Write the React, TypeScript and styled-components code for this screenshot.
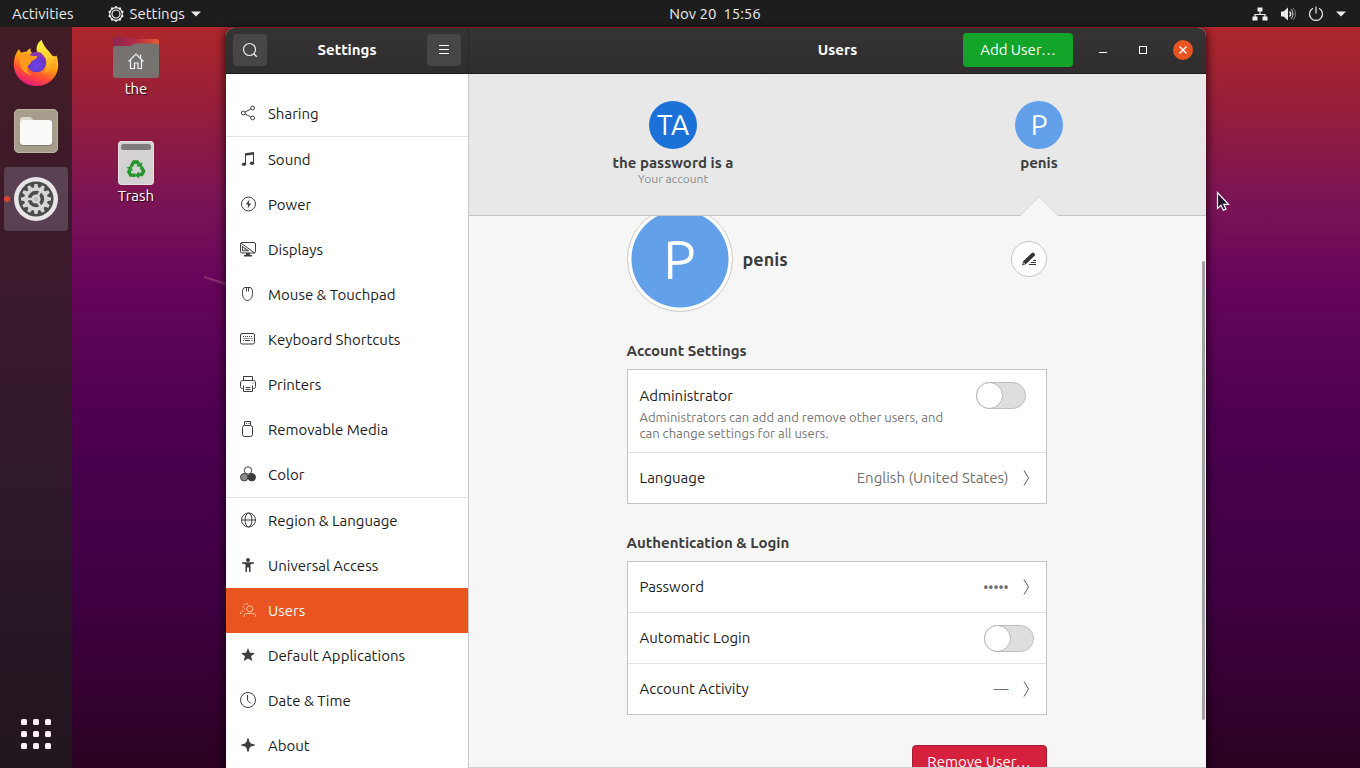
import type { ReactNode } from 'react';
import styled, { createGlobalStyle, css } from 'styled-components';

const GlobalStyle = createGlobalStyle`
  *, *::before {
    box-sizing: border-box;
  }

  body {
    margin: 0;
    font-family: 'Ubuntu', 'Noto Sans', 'Open Sans', sans-serif;
    font-size: 15px;
    line-height: 20px;
    color: #1c1c1c;
  }

  button {
    margin: 0;
    padding: 0;
    border: none;
    background: none;
    color: inherit;
    font: inherit;
    cursor: pointer;
  }

  svg {
    display: block;
    flex: none;
  }

  h1, h2, h3, p {
    margin: 0;
    font-size: inherit;
  }
`;

/* Desktop */

const Screen = styled.div`
  position: relative;
  display: flex;
  flex-direction: column;
  height: 100vh;
  overflow: hidden;
  background: linear-gradient(
    #b0272b 3%,
    #981f38 13%,
    #7b1455 26%,
    #68065b 36%,
    #4d0150 54%,
    #3f0042 78%,
    #2b0121 100%
  );
`;

const TopBar = styled.header`
  flex: none;
  display: grid;
  grid-template-columns: 1fr auto 1fr;
  align-items: center;
  height: 27px;
  padding: 0 14px 0 12px;
  background: #1d1d1d;
  color: #ececec;
`;

const TopBarGroup = styled.div<{ $gap: number; $end?: boolean }>`
  display: flex;
  align-items: center;
  justify-content: ${({ $end }) => ($end ? 'flex-end' : 'flex-start')};
  gap: ${({ $gap }) => $gap}px;
`;

const AppMenu = styled.button`
  display: flex;
  align-items: center;
  gap: 6px;
`;

const Clock = styled.button`
  margin-left: 72px;
  white-space: pre;
`;

const Workspace = styled.div`
  flex: 1;
  display: flex;
  min-height: 0;
`;

const Dock = styled.nav`
  flex: none;
  display: flex;
  flex-direction: column;
  align-items: center;
  gap: 4px;
  width: 72px;
  padding: 4px 0 2px;
  background: linear-gradient(#421c25, #3c1a2c 30%, #2b1829 70%, #21161e);
`;

const DockItem = styled.button<{ $active?: boolean }>`
  position: relative;
  display: flex;
  align-items: center;
  justify-content: center;
  width: 64px;
  height: 64px;
  border-radius: 4px;
  background: ${({ $active }) => ($active ? '#594152' : 'transparent')};

  &:last-child {
    margin-top: auto;
  }

  ${({ $active }) =>
    $active &&
    css`
      &::before {
        content: '';
        position: absolute;
        left: 0;
        top: 29px;
        width: 6px;
        height: 6px;
        border-radius: 50%;
        background: #e0452c;
      }
    `}
`;

const DesktopIcons = styled.div`
  flex: none;
  display: flex;
  flex-direction: column;
  align-items: center;
  gap: 42px;
  width: 154px;
  padding: 9px 26px 0 0;
`;

const DesktopIcon = styled.button`
  display: flex;
  flex-direction: column;
  align-items: center;
  gap: 1px;
  color: #fff;
  text-shadow: 1px 1px 1px rgba(0, 0, 0, 0.8);
`;

const WallpaperStroke = styled.svg`
  position: absolute;
  left: 203px;
  top: 274px;
`;

const Pointer = styled.svg`
  position: absolute;
  left: 1216px;
  top: 191px;
`;

/* Window */

const Window = styled.main`
  position: relative;
  flex: 1;
  display: flex;
  flex-direction: column;
  min-width: 0;
  margin: 1px 154px 0 0;
  border-radius: 8px 8px 0 0;
  background: #f6f6f6;
  box-shadow: 0 2px 9px 2px rgba(0, 0, 0, 0.6);
`;

const TitleBar = styled.header`
  flex: none;
  display: flex;
  height: 46px;
  border-bottom: 1px solid #1b1b1b;
  border-radius: 8px 8px 0 0;
  background: linear-gradient(#353333, #2f2d2e);
  color: #fff;
`;

const TitleSection = styled.div<{ $side?: boolean }>`
  display: grid;
  grid-template-columns: 1fr auto 1fr;
  align-items: center;
  ${({ $side }) =>
    $side
      ? css`
          flex: none;
          width: 243px;
          padding: 0 7px 2px;
          border-right: 1px solid #2a2829;
        `
      : css`
          flex: 1;
          padding: 0 13px 2px;
        `}
`;

const Title = styled.h1`
  grid-column: 2;
  font-weight: 700;
`;

const HeaderButton = styled.button<{ $end?: boolean }>`
  display: flex;
  align-items: center;
  justify-content: center;
  justify-self: ${({ $end }) => ($end ? 'end' : 'start')};
  width: 34px;
  height: 32px;
  border-radius: 4px;
  background: #474545;
`;

const WindowControls = styled.div`
  display: flex;
  align-items: center;
  justify-content: flex-end;
  gap: 20px;
`;

const AddButton = styled.button`
  width: 110px;
  height: 34px;
  border-radius: 4px;
  background: #12a52a;
`;

const ControlButton = styled.button<{ $close?: boolean }>`
  display: flex;
  align-items: center;
  justify-content: center;
  width: 20px;
  height: 20px;
  border-radius: 50%;
  background: ${({ $close }) => ($close ? '#e95420' : 'transparent')};
`;

const Body = styled.div`
  flex: 1;
  display: flex;
  min-height: 0;
`;

const Sidebar = styled.nav`
  flex: none;
  width: 243px;
  padding-top: 17px;
  overflow: hidden;
  border-right: 1px solid #c9c9c9;
  background: #fff;
`;

const SidebarItem = styled.a<{ $active?: boolean; $divided?: boolean }>`
  display: flex;
  align-items: center;
  gap: 12px;
  height: ${({ $divided }) => ($divided ? 46 : 45)}px;
  padding: 0 14px;
  border-bottom: ${({ $divided }) => ($divided ? '1px solid #e3e3e3' : 'none')};
  background: ${({ $active }) => ($active ? '#e95420' : 'transparent')};
  color: ${({ $active }) => ($active ? '#fff' : '#1c1c1c')};
  text-decoration: none;

  svg {
    margin-bottom: 2px;
    color: ${({ $active }) => ($active ? '#ffc7ad' : '#3d3d3d')};
  }
`;

const Panel = styled.section`
  flex: 1;
  display: flex;
  flex-direction: column;
  min-width: 0;
  border-bottom: 1px solid #d0d0d0;
`;

const Accounts = styled.div`
  flex: none;
  display: grid;
  grid-template-columns: 1fr 1fr;
  gap: 32px;
  height: 142px;
  padding-left: 37px;
  border-bottom: 1px solid #c4c4c4;
  background: #e8e8e8;
`;

const Account = styled.button`
  position: relative;
  display: flex;
  flex-direction: column;
  align-items: center;
  padding-top: 27px;
  color: #3d3d3d;
`;

const AccountName = styled.span`
  margin-top: 4px;
  font-weight: 700;
`;

const AccountNote = styled.span`
  font-size: 12px;
  line-height: 12px;
  color: #8b8b8b;
`;

const SelectedMark = styled.svg`
  position: absolute;
  left: calc(50% - 19px);
  bottom: -1px;
`;

const Avatar = styled.span<{ $color: string; $large?: boolean }>`
  flex: none;
  display: flex;
  align-items: center;
  justify-content: center;
  width: ${({ $large }) => ($large ? 106 : 48)}px;
  height: ${({ $large }) => ($large ? 106 : 48)}px;
  border-radius: 50%;
  background: ${({ $color }) => $color};
  color: #fff;
  font-size: ${({ $large }) => ($large ? 54 : 28)}px;

  ${({ $large, $color }) =>
    $large &&
    css`
      border: 1px solid #cfc8c4;
      background: radial-gradient(${$color} 48px, #fff 49px);
    `}
`;

const Scroller = styled.div`
  position: relative;
  flex: 1;
  min-height: 0;
  padding-right: 2px;
  overflow: hidden;
`;

const ScrollThumb = styled.div`
  position: absolute;
  right: 1px;
  top: 45px;
  bottom: 47px;
  width: 3px;
  border-radius: 2px;
  background: #a3a1a4;
`;

const Content = styled.div`
  display: flex;
  flex-direction: column;
  max-width: 420px;
  margin: -10px auto 0;
`;

const Profile = styled.div`
  display: flex;
  align-items: center;
  gap: 10px;
`;

const ProfileName = styled.h2`
  flex: 1;
  font-size: 18px;
  line-height: 24px;
  color: #3d3d3d;
`;

const EditButton = styled.button`
  display: flex;
  align-items: center;
  justify-content: center;
  width: 36px;
  height: 36px;
  border: 1px solid #c6c6c6;
  border-radius: 50%;
  background: #fdfdfd;
`;

const SectionTitle = styled.h3`
  margin: 29px 0 8px;
  color: #3d3d3d;
`;

const Card = styled.div`
  border: 1px solid #c4c4c4;
  background: #fff;
`;

const rowStyle = css`
  display: flex;
  align-items: center;
  gap: 14px;
  width: 100%;
  min-height: 50px;
  text-align: left;

  &:not(:first-child) {
    min-height: 51px;
    border-top: 1px solid #e2e2e2;
  }
`;

const Row = styled.div`
  ${rowStyle}
  padding: 0 12px;
`;

const RowButton = styled.button`
  ${rowStyle}
  padding: 0 16px 0 12px;
`;

const AdminRow = styled.div`
  display: grid;
  grid-template-columns: 1fr auto;
  align-items: center;
  padding: 12px 20px 11px 12px;
`;

const RowLabel = styled.label`
  flex: 1;
`;

const RowText = styled.span`
  flex: 1;
`;

const RowValue = styled.span<{ $masked?: boolean }>`
  font-size: ${({ $masked }) => ($masked ? 14 : 15)}px;
  color: #6f6f6f;
`;

const Hint = styled.p`
  max-width: 320px;
  font-size: 13px;
  line-height: 16px;
  color: #757575;
`;

const Switch = styled.input.attrs({ type: 'checkbox', role: 'switch' })`
  appearance: none;
  flex: none;
  width: 50px;
  height: 27px;
  margin: 0;
  border: 1px solid #bdbdbd;
  border-radius: 14px;
  background: #dedede;
  cursor: pointer;

  &::before {
    content: '';
    display: block;
    width: 27px;
    height: 27px;
    margin: -1px;
    border: 1px solid #b5b5b5;
    border-radius: 50%;
    background: #fff;
  }

  &:checked::before {
    margin-left: 22px;
  }
`;

const RemoveButton = styled.button`
  align-self: flex-end;
  width: 135px;
  height: 34px;
  margin-top: 30px;
  border: 1px solid #a31c33;
  border-radius: 4px;
  background: #d6213e;
  color: #fff;
`;

/* Icons */

type IconProps = { children: ReactNode; size?: number };

const LineIcon = ({ children, size = 16 }: IconProps) => (
  <svg width={size} height={size} viewBox="0 0 16 16" fill="none" stroke="currentColor" aria-hidden="true">
    {children}
  </svg>
);

const SharingIcon = () => (
  <LineIcon>
    <circle cx="3.3" cy="8" r="1.9" />
    <circle cx="12.6" cy="3" r="1.9" />
    <circle cx="12.6" cy="13" r="1.9" />
    <path d="M5 7.1l5.9-3.2M5 8.9l5.9 3.2" />
  </LineIcon>
);

const SoundIcon = () => (
  <LineIcon>
    <path d="M5.5 13V3.2l8-1.2v10" />
    <path d="M5 2.2l9-1.2v2.6l-9 1.2z" fill="currentColor" stroke="none" />
    <ellipse cx="4" cy="13.2" rx="2.1" ry="1.8" fill="currentColor" stroke="none" />
    <ellipse cx="12" cy="12.2" rx="2.1" ry="1.8" fill="currentColor" stroke="none" />
  </LineIcon>
);

const PowerIcon = () => (
  <LineIcon>
    <circle cx="8.5" cy="8" r="7" />
    <path d="M9.4 3.6L5.8 8.6h2.4l-.6 3.8 3.6-5H8.8z" fill="currentColor" stroke="none" />
  </LineIcon>
);

const DisplaysIcon = () => (
  <LineIcon>
    <rect x=".5" y="1.5" width="15" height="10.5" rx="1.5" />
    <path d="M1 2l13.5 10M2.5 5.5v4.3h6zM4.2 8.2h1.4" />
    <path d="M6 12h4v2h2v1.4H4V14h2z" fill="currentColor" stroke="none" />
  </LineIcon>
);

const MouseIcon = () => (
  <LineIcon>
    <path d="M5 1.5h5c2 0 2.5 2.6 2.5 5.8 0 4-1.8 7.2-5 7.2s-5-3.2-5-7.2C2.5 4.1 3 1.5 5 1.500zM6.500 1.500v4M8.500 1.500v4" />
  </LineIcon>
);

const KeyboardIcon = () => (
  <LineIcon>
    <rect x=".5" y="2.5" width="14" height="10.5" rx="1.5" />
    <path d="M3 5.5h9.5M3.500 7.500h9" strokeDasharray="1 1" />
    <path d="M3 9.500h1M5 9.500h5M11.500 9.500h1" />
  </LineIcon>
);

const PrinterIcon = () => (
  <LineIcon>
    <path d="M3.5 4.5v-4h9v4M3 12.5H2.3C1 12.5.5 11.8.5 10.5V7c0-1.500.8-2.500 2.200-2.500h10.600c1.400 0 2.200 1 2.200 2.500v3.500c0 1.300-.5 2-1.800 2H13" />
    <path d="M3.5 9.5v6h9v-6M5.500 11.500h5M5.500 13.500h5M12.500 7h1" />
  </LineIcon>
);

const RemovableIcon = () => (
  <LineIcon>
    <path d="M4.5 4V.5h6V4M6 2.5h1M8.500 2.500h1" />
    <rect x="2.5" y="4.5" width="10" height="11" rx="2" />
  </LineIcon>
);

const ColorIcon = () => (
  <LineIcon>
    <circle cx="8" cy="4.5" r="3.7" fill="#fff" />
    <circle cx="4.2" cy="11.2" r="3.7" fill="#8a8a8a" />
    <circle cx="11.8" cy="11.2" r="3.7" fill="currentColor" />
  </LineIcon>
);

const GlobeIcon = () => (
  <LineIcon>
    <circle cx="8.5" cy="8" r="7" />
    <ellipse cx="8.5" cy="8" rx="3.4" ry="7" />
    <path d="M1.5 8h14" />
  </LineIcon>
);

const AccessIcon = () => (
  <LineIcon>
    <circle cx="8" cy="3" r="2" fill="currentColor" stroke="none" />
    <path d="M2 5.2h12v1.300l-3.500.7V15H9v-4.500H7V15H5.500V7.200L2 6.500z" fill="currentColor" stroke="none" />
  </LineIcon>
);

const UsersIcon = () => (
  <LineIcon>
    <circle cx="9.800" cy="6.800" r="3" />
    <path d="M4 15v-.8c0-2 1.200-2.700 3.200-2.700h5.300c2 0 3.200.7 3.200 2.700v.8" />
    <path d="M8 2.200C6 .8 3.300 2 3.300 4.400c0 1.500.7 2.500 1.800 3.100M.5 12c0-2 1-3 3-3" strokeDasharray="2 1" />
  </LineIcon>
);

const StarIcon = () => (
  <LineIcon>
    <path d="M8 1l1.900 4.700 5 .3-3.900 3.200 1.300 4.900L8 11.400l-4.300 2.700L5 9.200 1.100 6l5-.3z" fill="currentColor" stroke="none" />
  </LineIcon>
);

const ClockIcon = () => (
  <LineIcon>
    <circle cx="8" cy="8" r="7.5" />
    <path d="M7.5 3v5.300l3 3" />
  </LineIcon>
);

const AboutIcon = () => (
  <LineIcon>
    <path d="M8 1.500C8.800 5.500 10.200 7.200 14.500 8 10.200 8.800 8.800 10.500 8 14.500 7.200 10.500 5.800 8.800 1.500 8 5.800 7.200 7.200 5.500 8 1.500z" fill="currentColor" />
  </LineIcon>
);

const Chevron = () => (
  <svg width="7" height="16" viewBox="0 0 7 16" fill="none" stroke="#5a5a5a" aria-hidden="true">
    <path d="M1 .5L5.5 8 1 15.5" />
  </svg>
);

const CaretDown = () => (
  <svg width="10" height="6" viewBox="0 0 10 6" fill="#ececec" aria-hidden="true">
    <path d="M0 .5h10L5 5.5z" />
  </svg>
);

const bumps = [0, 36, 72, 108, 144, 180, 216, 252, 288, 324];

const GearMenuIcon = () => (
  <LineIcon>
    <circle cx="8" cy="8" r="6.3" strokeWidth="1.200" />
    <circle cx="8" cy="8" r="4" strokeWidth="1.200" />
    {bumps.map((angle) => (
      <circle key={angle} cx="8" cy="1.200" r="1.100" fill="currentColor" stroke="none" transform={`rotate(${angle} 8 8)`} />
    ))}
  </LineIcon>
);

const NetworkIcon = () => (
  <LineIcon>
    <path d="M8 5v4M3 12V8.500h10V12" strokeWidth="1.200" />
    <path d="M5.500 1.500h5v4h-5zM.5 10.500h5v4h-5zM10.500 10.500h5v4h-5z" fill="currentColor" stroke="none" />
  </LineIcon>
);

const VolumeIcon = () => (
  <LineIcon>
    <path d="M1 5.500h2.500L8 1.500v13l-4.500-4H1z" fill="currentColor" stroke="none" />
    <path d="M9.500 5.500c1.300 1.400 1.300 3.600 0 5" strokeWidth="1.400" />
    <path d="M11 3.200c2.500 2.700 2.500 6.900 0 9.600" />
    <path d="M13 2c3.200 3.500 3.200 8.500 0 12" opacity=".5" />
  </LineIcon>
);

const ShutdownIcon = () => (
  <LineIcon>
    <path d="M5 2.200a6.500 6.500 0 1 0 6 0M8 .5v7" strokeWidth="1.200" />
  </LineIcon>
);

const PencilIcon = () => (
  <LineIcon>
    <path d="M1 14.500l1.200-4.200L10.800 2c.7-.7 1.500-.7 2.200 0l.6.700c.7.7.6 1.400 0 2.100L5 13z" fill="#333" stroke="none" />
    <path d="M2.700 11.200l1.400 1.400-1.900.8z" fill="#ddd" stroke="none" />
    <path d="M12 9.500h3M10 11.500h5M8 13.500h7" stroke="#333" />
  </LineIcon>
);

const FirefoxIcon = () => (
  <svg width="46" height="48" viewBox="0 0 46 48" aria-hidden="true">
    <defs>
      <linearGradient id="fox-body" x1=".8" y1=".1" x2=".35" y2="1">
        <stop offset="0" stopColor="#ffe03a" />
        <stop offset=".4" stopColor="#ff980e" />
        <stop offset=".7" stopColor="#ff4a38" />
        <stop offset="1" stopColor="#e5177e" />
      </linearGradient>
      <linearGradient id="fox-flame" x1=".3" y1="0" x2=".8" y2="1">
        <stop offset="0" stopColor="#fff04a" />
        <stop offset=".5" stopColor="#ffd22e" />
        <stop offset="1" stopColor="#ff8a1c" />
      </linearGradient>
      <radialGradient id="fox-globe" cx=".5" cy=".7" r=".7">
        <stop offset="0" stopColor="#6a42e8" />
        <stop offset=".6" stopColor="#6b38c4" />
        <stop offset="1" stopColor="#9a35b4" />
      </radialGradient>
    </defs>
    <path
      d="M6 10c.6 1.700 1.200 2.700 2.500 3.700 1.700-.8 3.300-1 5-.7 1-1.800 2.300-3 4-3.800-.3 2 .2 3.700 1.500 4.800l13-2c5.500 3 9 7.500 11.500 4.500C45.500 22 46 29 43.500 34.500 40 42.500 32 47 23.500 47 11 47 .8 37.500.8 25.500.8 19 2.500 14 6 10z"
      fill="url(#fox-body)"
    />
    <path
      d="M28.500.8c-4 3-5.400 7-4.700 11.700 7 1.500 10.700 6.500 10.200 13-.2 3.500-1.500 6-3.500 8.500C38 33 43 28.500 44 21c-.8-1.700-2-3.300-3.300-4.500.2 1.600 0 2.700-.5 3.500-1.300-7-8.800-9.500-11.700-19.200z"
      fill="url(#fox-flame)"
    />
    <circle cx="23.5" cy="23.5" r="9.8" fill="url(#fox-globe)" />
    <path d="M16.500 16c3-3.500 9-4.500 14-.5-3-.5-5 0-6.500 1.300z" fill="#8d35b6" />
    <path
      d="M6.500 16.500c3.500-2.500 7.500-2.800 10.500-.3 2 1 5 .6 7 .8.8.8-.5 2.700-2.500 3.800-2 1.200-3.500 1.200-3.800 3-.3 1.600-2.200 1.700-3.200 3.500-1.500 3 .5 7 4.500 8.500-8 0-14-8-12.500-19.300z"
      fill="#ff9a1f"
    />
  </svg>
);

const FilesIcon = () => (
  <svg width="44" height="44" viewBox="0 0 44 44" aria-hidden="true">
    <rect width="44" height="44" rx="5" fill="#a69d8c" />
    <rect x=".5" y=".5" width="43" height="43" rx="4.5" fill="none" stroke="#bdb4a4" />
    <path d="M6 10.500C6 9 7 8 8.500 8h7c1.200 0 1.800.5 2.500 1.500l1.500 2H24v8H6z" fill="#dcd7cb" />
    <rect x="6" y="12" width="32" height="25" rx="3" fill="#827a6b" />
    <rect x="6" y="11" width="32" height="25" rx="3" fill="#fbfaf8" />
  </svg>
);

const teeth = [0, 30, 60, 90, 120, 150, 180, 210, 240, 270, 300, 330];

const SettingsAppIcon = () => (
  <svg width="44" height="44" viewBox="0 0 44 44" aria-hidden="true">
    <circle cx="22" cy="22" r="22" fill="#e9e4e8" />
    <circle cx="22" cy="22" r="17.5" fill="#4b4b4b" />
    <g fill="#d6d6d6">
      {teeth.map((angle) => (
        <path key={angle} d="M19.800 11l.7-4h3l.7 4z" transform={`rotate(${angle} 22 22)`} />
      ))}
    </g>
    <circle cx="22" cy="22" r="10" fill="none" stroke="#d6d6d6" strokeWidth="3.600" />
    <circle cx="22" cy="22" r="4.600" fill="#d6d6d6" />
    <path d="M22 22h-9M22 22l4.800 8M22 22l4.800-8" stroke="#d6d6d6" strokeWidth="2.400" />
    <circle cx="22" cy="22" r="2.200" fill="#bdbdbd" />
  </svg>
);

const AppsGridIcon = () => (
  <svg width="30" height="30" viewBox="0 0 30 30" fill="#fbeef8" aria-hidden="true">
    {[0, 12, 24].map((y) => [0, 12, 24].map((x) => <rect key={`${x}-${y}`} x={x} y={y} width="6" height="6" rx="1.500" />))}
  </svg>
);

const HomeFolderIcon = () => (
  <svg width="46" height="42" viewBox="0 0 46 42" aria-hidden="true">
    <defs>
      <linearGradient id="folder-back">
        <stop offset="0" stopColor="#8c2454" />
        <stop offset=".5" stopColor="#b62b45" />
        <stop offset="1" stopColor="#ea5a2c" />
      </linearGradient>
    </defs>
    <path d="M0 4c0-2 1.200-3 3-3h12c3 0 3.500 2 6 2h22c2 0 3 1 3 3v10H0z" fill="url(#folder-back)" />
    <path d="M0 13c0-2 1-3 3-3h13c3 0 3.500-2.500 6.500-2.500H43c2 0 3 1 3 3V39c0 2-1 3-3 3H3c-2 0-3-1-3-3z" fill="#757270" />
    <path d="M15.500 25.500l7.500-7.500 7.500 7.500M17.500 24v8.500h4V27h3.500v5.500h3.500V24M27.500 22v-3.500" fill="none" stroke="#f2f2f2" strokeWidth="1.200" />
  </svg>
);

const TrashIcon = () => (
  <svg width="36" height="44" viewBox="0 0 36 44" aria-hidden="true">
    <rect width="36" height="44" rx="4" fill="#d3d1d1" />
    <rect x=".5" y=".5" width="35" height="43" rx="3.5" fill="none" stroke="#e3e1e1" />
    <rect x="3" y="3" width="30" height="6" rx="2.5" fill="#7d7b7c" />
    <g fill="none" stroke="#24942c" strokeWidth="3.400">
      {[0, 120, 240].map((angle) => (
        <g key={angle} transform={`rotate(${angle} 18 28.500)`}>
          <path d="M13.200 25.300l2.600-4.300h3.600l1.400 2.300" />
          <path d="M18.200 25.200l5.400 1 .8-5.200z" fill="#24942c" stroke="none" />
        </g>
      ))}
    </g>
  </svg>
);

/* Data */

const panels = [
  { label: 'Sharing', icon: <SharingIcon />, divided: true },
  { label: 'Sound', icon: <SoundIcon /> },
  { label: 'Power', icon: <PowerIcon /> },
  { label: 'Displays', icon: <DisplaysIcon /> },
  { label: 'Mouse & Touchpad', icon: <MouseIcon /> },
  { label: 'Keyboard Shortcuts', icon: <KeyboardIcon /> },
  { label: 'Printers', icon: <PrinterIcon /> },
  { label: 'Removable Media', icon: <RemovableIcon /> },
  { label: 'Color', icon: <ColorIcon />, divided: true },
  { label: 'Region & Language', icon: <GlobeIcon /> },
  { label: 'Universal Access', icon: <AccessIcon /> },
  { label: 'Users', icon: <UsersIcon />, active: true },
  { label: 'Default Applications', icon: <StarIcon /> },
  { label: 'Date & Time', icon: <ClockIcon /> },
  { label: 'About', icon: <AboutIcon /> },
];

const SystemBar = () => (
  <TopBar>
    <TopBarGroup $gap={34}>
      <button>Activities</button>
      <AppMenu>
        <GearMenuIcon />
        Settings
        <CaretDown />
      </AppMenu>
    </TopBarGroup>
    <Clock>Nov 20  15:56</Clock>
    <TopBarGroup $gap={12} $end>
      <NetworkIcon />
      <VolumeIcon />
      <ShutdownIcon />
      <CaretDown />
    </TopBarGroup>
  </TopBar>
);

const WindowHeader = () => (
  <TitleBar>
    <TitleSection $side>
      <HeaderButton aria-label="Search">
        <LineIcon>
          <circle cx="7.5" cy="7.5" r="6" stroke="#e8e8e8" strokeWidth="1.200" />
          <path d="M11.800 11.800l3 3" stroke="#e8e8e8" strokeWidth="1.500" />
        </LineIcon>
      </HeaderButton>
      <Title>Settings</Title>
      <HeaderButton aria-label="Menu" $end>
        <LineIcon>
          <path d="M3 3.500h10M3 7.500h10M3 11.500h10" stroke="#fff" />
        </LineIcon>
      </HeaderButton>
    </TitleSection>
    <TitleSection>
      <Title as="h2">Users</Title>
      <WindowControls>
        <AddButton>Add User…</AddButton>
        <ControlButton aria-label="Minimize">
          <LineIcon>
            <path d="M4 10.500h8" />
          </LineIcon>
        </ControlButton>
        <ControlButton aria-label="Maximize">
          <LineIcon>
            <rect x="4.5" y="4.5" width="7" height="7" />
          </LineIcon>
        </ControlButton>
        <ControlButton aria-label="Close" $close>
          <LineIcon>
            <path d="M4.500 4.500l7 7M11.500 4.500l-7 7" strokeWidth="1.400" />
          </LineIcon>
        </ControlButton>
      </WindowControls>
    </TitleSection>
  </TitleBar>
);

const UsersPanel = () => (
  <Panel>
    <Accounts>
      <Account>
        <Avatar $color="#1c71d8">TA</Avatar>
        <AccountName>the password is a</AccountName>
        <AccountNote>Your account</AccountNote>
      </Account>
      <Account>
        <Avatar $color="#62a0ea">P</Avatar>
        <AccountName>penis</AccountName>
        <SelectedMark width="38" height="20" viewBox="0 0 38 20" aria-hidden="true">
          <path d="M0 20L19 1l19 19z" fill="#f6f6f6" />
          <path d="M0 19.500L19 .5l19 19" fill="none" stroke="#d2d2d2" />
        </SelectedMark>
      </Account>
    </Accounts>
    <Scroller>
      <Content>
        <Profile>
          <Avatar $color="#62a0ea" $large>P</Avatar>
          <ProfileName>penis</ProfileName>
          <EditButton aria-label="Edit name">
            <PencilIcon />
          </EditButton>
        </Profile>

        <SectionTitle>Account Settings</SectionTitle>
        <Card>
          <AdminRow>
            <label htmlFor="administrator">Administrator</label>
            <Switch id="administrator" />
            <Hint>Administrators can add and remove other users, and can change settings for all users.</Hint>
          </AdminRow>
          <RowButton>
            <RowText>Language</RowText>
            <RowValue>English (United States)</RowValue>
            <Chevron />
          </RowButton>
        </Card>

        <SectionTitle>Authentication &amp; Login</SectionTitle>
        <Card>
          <RowButton>
            <RowText>Password</RowText>
            <RowValue $masked>•••••</RowValue>
            <Chevron />
          </RowButton>
          <Row>
            <RowLabel htmlFor="automatic-login">Automatic Login</RowLabel>
            <Switch id="automatic-login" />
          </Row>
          <RowButton>
            <RowText>Account Activity</RowText>
            <RowValue>—</RowValue>
            <Chevron />
          </RowButton>
        </Card>

        <RemoveButton>Remove User…</RemoveButton>
      </Content>
      <ScrollThumb />
    </Scroller>
  </Panel>
);

const App = () => (
  <Screen>
    <GlobalStyle />
    <WallpaperStroke width="26" height="14" viewBox="0 0 26 14" aria-hidden="true">
      <path d="M1 2l24 7v3L1 4z" fill="#a04a80" opacity=".55" />
    </WallpaperStroke>
    <SystemBar />
    <Workspace>
      <Dock>
        <DockItem aria-label="Firefox">
          <FirefoxIcon />
        </DockItem>
        <DockItem aria-label="Files">
          <FilesIcon />
        </DockItem>
        <DockItem aria-label="Settings" $active>
          <SettingsAppIcon />
        </DockItem>
        <DockItem aria-label="Show Applications">
          <AppsGridIcon />
        </DockItem>
      </Dock>
      <DesktopIcons>
        <DesktopIcon>
          <HomeFolderIcon />
          the
        </DesktopIcon>
        <DesktopIcon>
          <TrashIcon />
          Trash
        </DesktopIcon>
      </DesktopIcons>
      <Window>
        <WindowHeader />
        <Body>
          <Sidebar>
            {panels.map(({ label, icon, active, divided }) => (
              <SidebarItem key={label} href="#" $active={active} $divided={divided}>
                {icon}
                {label}
              </SidebarItem>
            ))}
          </Sidebar>
          <UsersPanel />
        </Body>
      </Window>
    </Workspace>
    <Pointer width="14" height="22" viewBox="0 0 14 22" aria-hidden="true">
      <path d="M1.500 1.500v16l3.500-3.200 2.300 5 2.700-1.200-2.200-4.800h4.700z" fill="#24142b" stroke="#fff" strokeWidth="1.200" />
    </Pointer>
  </Screen>
);

export default App;
